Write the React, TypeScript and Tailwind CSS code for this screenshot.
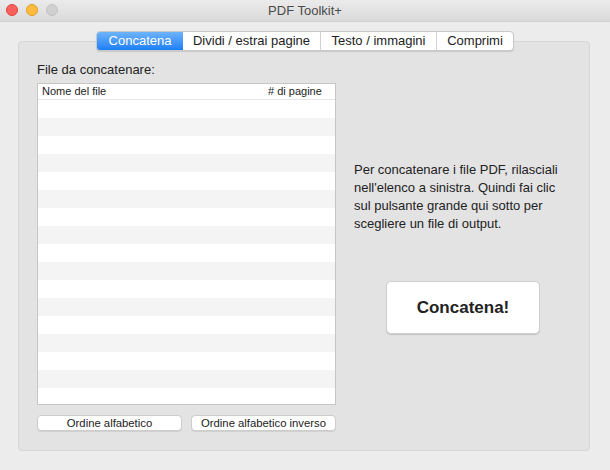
import React from "react";

const tabs = [
  { label: "Concatena", width: "w-[86px]", active: true },
  { label: "Dividi / estrai pagine", width: "w-[137px]", active: false },
  { label: "Testo / immagini", width: "w-[116px]", active: false },
  { label: "Comprimi", width: "w-[77px]", active: false },
];

const rows = Array.from({ length: 17 }, (_, i) => i);

const App = () => {
  return (
    <div
      className="w-[610px] h-[470px] bg-[#ececec] overflow-hidden flex flex-col"
      style={{ fontFamily: '"Liberation Sans", Arial, sans-serif' }}
    >
      {/* title bar */}
      <div className="relative h-[22px] flex items-center justify-center bg-gradient-to-b from-[#ebebeb] to-[#dadada] border-b border-[#d2d2d2]">
        <div className="absolute left-[6px] top-[4px] flex gap-[8px]">
          <span className="w-[12px] h-[12px] rounded-full bg-[#fc605c] border border-[#e0443e]" />
          <span className="w-[12px] h-[12px] rounded-full bg-[#fdbc40] border border-[#dea123]" />
          <span className="w-[12px] h-[12px] rounded-full bg-[#d0d0d0] border border-[#c2c2c2]" />
        </div>
        <span className="text-[13px] text-[#4a4a4a]">PDF Toolkit+</span>
      </div>

      <div className="flex flex-col pt-[9px]">
        {/* tab strip */}
        <div className="self-center z-10 flex h-[20px] rounded-[4px] bg-white border border-[#c9c9c9] shadow-[0_1px_1px_rgba(0,0,0,0.12)] overflow-hidden">
          {tabs.map((t, i) => (
            <div
              key={t.label}
              className={
                t.active
                  ? `${t.width} flex items-center justify-center text-[13px] text-white bg-gradient-to-b from-[#6db3fb] to-[#1b7ff6]`
                  : `${t.width} flex items-center justify-center text-[13px] text-[#222] ${i > 1 ? "border-l border-[#d2d2d2]" : ""}`
              }
            >
              {t.label}
            </div>
          ))}
        </div>

        {/* tab panel */}
        <div className="-mt-[10px] ml-[18px] w-[572px] h-[410px] rounded-[4px] bg-[#e3e3e3] border border-[#d6d6d6] flex pl-[18px] pt-[20px]">
          <div className="w-[299px] flex flex-col">
            <p className="text-[13px] leading-[16px] text-[#222] mb-[5px]">File da concatenare:</p>
            <div className="h-[322px] bg-white border border-[#c6c6c6] flex flex-col overflow-hidden">
              <div className="h-[16px] flex items-center justify-between px-[4px] text-[11px] text-[#222] border-b border-[#e6e6e6] shrink-0">
                <span>Nome del file</span>
                <span className="w-[63px]"># di pagine</span>
              </div>
              {rows.map((r) => (
                <div
                  key={r}
                  className={`h-[18px] shrink-0 ${r % 2 === 0 ? "bg-white" : "bg-[#f4f4f4]"}`}
                />
              ))}
            </div>
            <div className="flex justify-between mt-[10px]">
              <button className="w-[145px] h-[16px] rounded-[4px] bg-white border border-[#cdcdcd] shadow-[0_1px_0_rgba(0,0,0,0.08)] text-[11.3px] leading-[14px] text-[#222]">
                Ordine alfabetico
              </button>
              <button className="w-[145px] h-[16px] rounded-[4px] bg-white border border-[#cdcdcd] shadow-[0_1px_0_rgba(0,0,0,0.08)] text-[11.3px] leading-[14px] text-[#222]">
                Ordine alfabetico inverso
              </button>
            </div>
          </div>

          <div className="ml-[18px] w-[218px] flex flex-col pt-[99px]">
            <p className="text-[13px] leading-[18px] text-[#222] w-[212px]">
              Per concatenare i file PDF, rilasciali nell'elenco a sinistra. Quindi fai clic sul pulsante grande qui sotto per scegliere un file di output.
            </p>
            <button className="self-center mt-[48px] w-[154px] h-[53px] rounded-[5px] bg-white border border-[#d0d0d0] shadow-[0_1px_1px_rgba(0,0,0,0.15)] text-[17px] font-bold text-[#222]">
              Concatena!
            </button>
          </div>
        </div>
      </div>
    </div>
  );
};

export default App;
